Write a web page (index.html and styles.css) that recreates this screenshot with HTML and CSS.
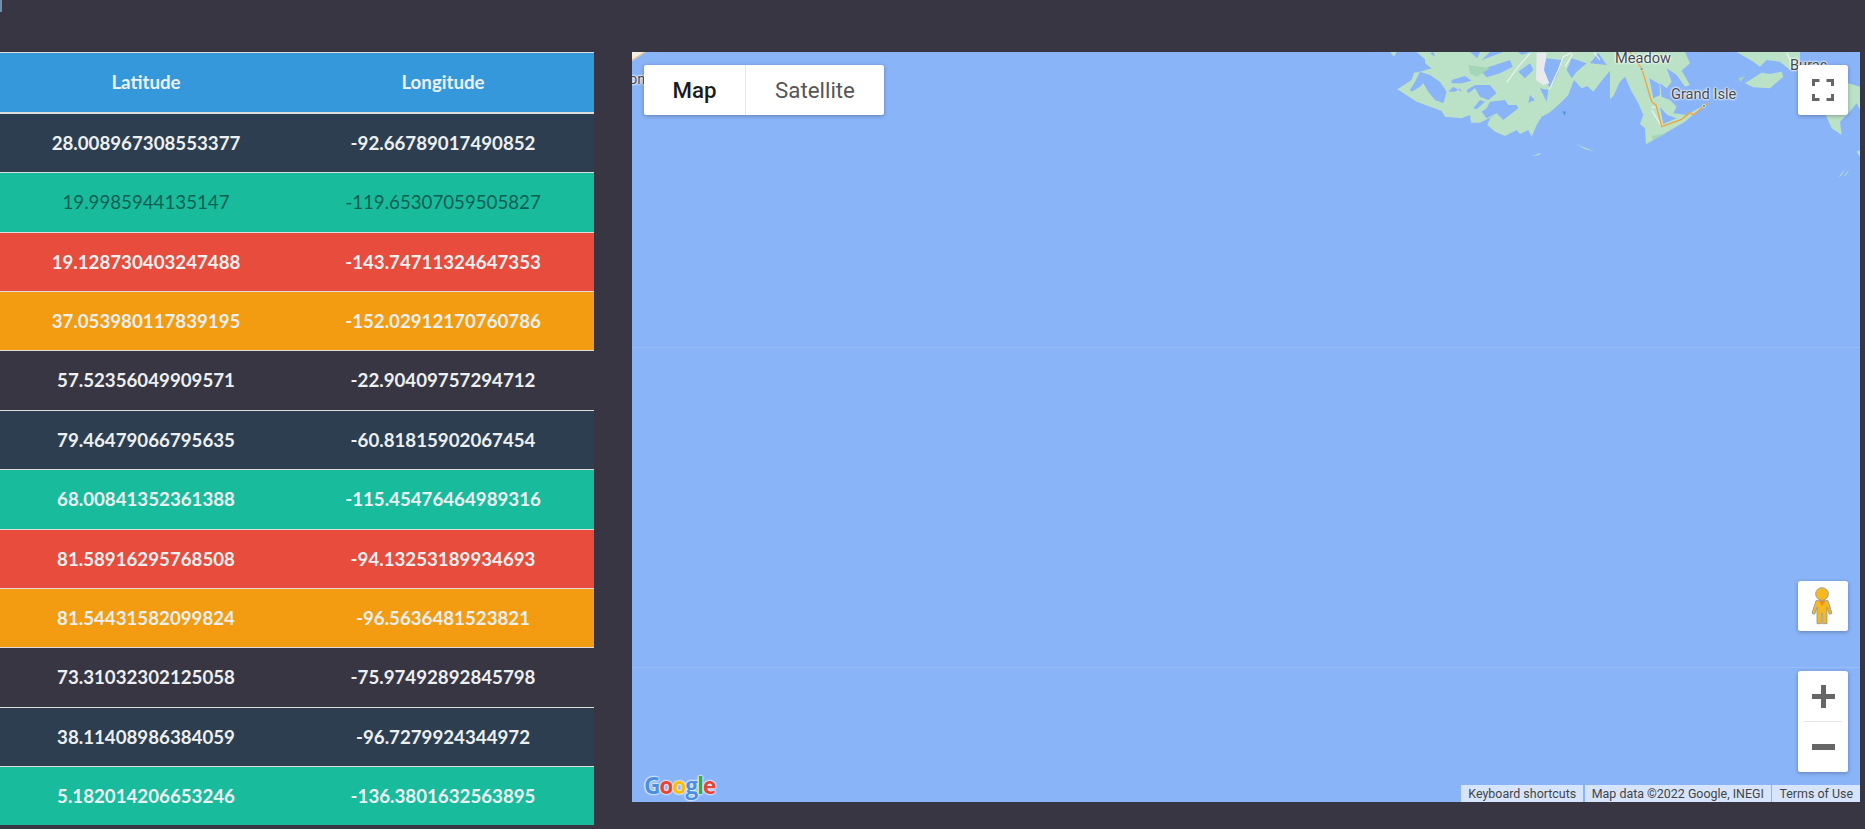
FILE: index.html
```html
<!DOCTYPE html>
<html lang="en">
<head>
    <meta charset="UTF-8">
    <title>Coordinates</title>
    <link rel="stylesheet" href="styles.css">
</head>
<body>
    <div class="corner-mark"></div>
    <div class="page">
        <table class="coords">
            <thead>
                <tr><th class="col-lat">Latitude</th><th class="col-lng">Longitude</th></tr>
            </thead>
            <tbody>
                <tr class="row-navy"><td>28.008967308553377</td><td>-92.66789017490852</td></tr>
                <tr class="row-green row-hover"><td>19.9985944135147</td><td>-119.65307059505827</td></tr>
                <tr class="row-red"><td>19.128730403247488</td><td>-143.74711324647353</td></tr>
                <tr class="row-orange"><td>37.053980117839195</td><td>-152.02912170760786</td></tr>
                <tr class="row-dark"><td>57.52356049909571</td><td>-22.90409757294712</td></tr>
                <tr class="row-navy"><td>79.46479066795635</td><td>-60.81815902067454</td></tr>
                <tr class="row-green"><td>68.00841352361388</td><td>-115.45476464989316</td></tr>
                <tr class="row-red"><td>81.58916295768508</td><td>-94.13253189934693</td></tr>
                <tr class="row-orange"><td>81.54431582099824</td><td>-96.5636481523821</td></tr>
                <tr class="row-dark"><td>73.31032302125058</td><td>-75.97492892845798</td></tr>
                <tr class="row-navy"><td>38.11408986384059</td><td>-96.7279924344972</td></tr>
                <tr class="row-green"><td>5.182014206653246</td><td>-136.3801632563895</td></tr>
            </tbody>
        </table>

        <div class="map">
            <!-- coast, drawn at 3x so the numbers are easy to compare -->
            <svg class="land" viewBox="0 6 1410 420" width="470" height="140">
                <path class="land-fill" d="M22 118L65 90L72 68L90 65L125 55L105 40L105 28L80 6H660V62L635 92L610 125L592 108L575 115L552 90L535 135L505 165L478 188L455 200L440 225L425 260L415 240L390 252L380 240L345 258L315 245L292 225L300 205L322 192L270 218L243 218L240 195L215 205L165 200L155 183L80 155Z"/>
                <path class="land-fill" d="M0 6H20L12 20ZM560 283L615 305L585 297ZM425 318L455 308L445 316Z"/>
                <path class="water" d="M60 120L75 95L90 65L120 75L150 95L170 125L160 160L135 150L115 125L100 100L90 110L65 125ZM185 90L225 78L245 92L215 100L185 100ZM270 60L360 30L368 50L330 70L290 82ZM230 120L255 105L300 105L320 130L295 150L270 140L255 115L235 130ZM215 125L210 115L195 125L175 125L190 110ZM250 175L270 150L285 155L260 178ZM300 155L345 150L355 165L380 165L385 175L340 210L320 190L290 205L275 185L290 175ZM385 65L420 40L430 60L405 85ZM470 25L515 30L505 70L480 115L455 70ZM420 135L435 150L415 158ZM545 25L590 40L560 65L545 85L530 60ZM625 8L650 45L600 40ZM450 115L475 120L470 155ZM240 6H270L262 25ZM300 6H340L275 30ZM385 6H420L395 15ZM130 6L135 20L120 10Z"/>
                <path class="land-dark" d="M235 45L300 55L260 80L240 70Z"/>
                <path class="land-white" d="M440 8H470L462 60L478 100L460 105L438 90Z"/>
                <path class="road-white" d="M350 97L385 50L420 10M478 118L505 60L520 20L545 8M525 50L548 12M612 8L630 30"/>
                <path class="inlet" d="M517 183L527 185L525 198Z"/>

                <g transform="translate(660 0)">
                    <path class="land-fill" d="M0 6H225L240 40L215 62L240 105L225 110L200 75L170 55L185 95L170 115L150 100L155 140L180 150L200 170L190 190L230 195L295 158L260 185L225 215L130 270L108 283L105 235L90 222L100 195L85 160L65 125L45 80L30 95L25 105L12 135L0 148Z"/>
                    <path class="water" d="M118 85L148 102L150 135L130 145ZM150 172L172 195L200 205L160 222Z"/>
                    <path class="land-fill" d="M380 6L430 35L450 50L470 30L510 35L540 60L570 45V6ZM405 100L455 68L480 72L515 65L520 80L480 115L430 112ZM715 100L750 110V180L740 160L715 190L690 215L695 255L665 235L645 190ZM740 305L750 300V320ZM685 383L705 355L695 375ZM700 380L718 358L708 375Z"/>
                    <path class="land-dark" d="M125 258L170 250L130 270ZM385 85L405 78L392 95Z"/>
                    <path class="road-white" d="M125 172H136M125 180L155 230M530 8L545 40"/>
                    <path class="road" d="M60 6L95 55L125 155L138 165L155 230L215 208L240 188L250 195L295 158"/>
                    <circle class="road-dot" cx="95" cy="57" r="5"/>
                    <circle class="road-dot" cx="282" cy="168" r="5"/>
                </g>
            </svg>
            <svg class="corner-road" viewBox="0 0 14 9" width="14" height="9">
                <path d="M0 9V0H14Z" fill="#f3ede2"/>
                <path d="M0 8L13 0" stroke="#f2b568" fill="none"/>
            </svg>

            <span class="place place-on">on</span>
            <span class="place place-meadow">Meadow</span>
            <span class="place place-isle">Grand Isle</span>
            <span class="place place-buras">Buras</span>

            <div class="seam seam-1"></div>
            <div class="seam seam-2"></div>

            <div class="map-type ctrl">
                <div class="type-btn type-map">Map</div>
                <div class="type-btn type-sat">Satellite</div>
            </div>

            <div class="fullscreen ctrl">
                <svg viewBox="0 0 22 22" width="22" height="22">
                    <path d="M1.5 7V1.5H7.5M14.5 1.5H20.5V7M20.5 15V20.5H14.5M7.5 20.5H1.5V15" fill="none" stroke="#666" stroke-width="3"/>
                </svg>
            </div>

            <div class="pegman ctrl">
                <svg viewBox="114 33 150 150" width="50" height="50">
                    <circle cx="186" cy="72" r="19" fill="#f7b81f" stroke="#8a969b" stroke-width="2.5"/>
                    <path d="M168 92H204L216 130L208 133L201 112V161H188V131H184V161H171V112L164 133L156 130Z" fill="#f7b81f" stroke="#8a969b" stroke-width="2.5" stroke-linejoin="round"/>
                    <path d="M177 92H196L186 108Z" fill="#e98a24"/>
                </svg>
            </div>

            <div class="zoom ctrl">
                <div class="zoom-btn">
                    <svg viewBox="0 0 23 23" width="23" height="23"><path d="M9 0H14V9H23V14H14V23H9V14H0V9H9Z" fill="#666"/></svg>
                </div>
                <div class="zoom-line"></div>
                <div class="zoom-btn">
                    <svg viewBox="0 0 23 6" width="23" height="6"><path d="M0 0H23V6H0Z" fill="#666"/></svg>
                </div>
            </div>

            <div class="google"><span class="g-blue">G</span><span class="g-red">o</span><span class="g-yellow">o</span><span class="g-blue">g</span><span class="g-green">l</span><span class="g-red">e</span></div>

            <div class="attribution">
                <span>Keyboard shortcuts</span>
                <span>Map data ©2022 Google, INEGI</span>
                <span>Terms of Use</span>
            </div>
        </div>
    </div>
</body>
</html>
```

FILE: styles.css
```css
body {
    margin: 0;
    background-color: #393643;
    font-family: "Lato", sans-serif;
    overflow: hidden;
}
.corner-mark {
    position: absolute;
    top: 0;
    left: 0;
    width: 2px;
    height: 12px;
    background-color: #6f8fad;
}
.page {
    display: flex;
    align-items: flex-start;
    gap: 38px;
    padding: 52px 5px 0 0;
}

/* table */
.coords {
    flex: none;
    width: 594px;
    border-collapse: separate;
    border-spacing: 0;
    table-layout: fixed;
    color: #ecf0f1;
    font-size: 18.7px;
    font-weight: 700;
    text-align: center;
    line-height: 26.36px;
}
.coords th {
    padding: 16.32px 0;
    background-color: #3498db;
    border-top: 1px solid #ddd;
    border-bottom: 2px solid #ddd;
}
.col-lat {
    width: 292px;
}
.col-lng {
    width: 302px;
}
.coords td {
    padding: 16px 0;
    border-top: 1px solid #ddd;
}
.coords tbody tr:first-child td {
    border-top: 0;
}
.row-navy td {
    background-color: #2c3e50;
}
.row-green td {
    background-color: #18bc9c;
}
.row-red td {
    background-color: #e74c3c;
}
.row-orange td {
    background-color: #f39c12;
}
.row-dark td {
    background-color: #393643;
}
.row-hover td {
    color: #0f5e52;
    font-weight: 400;
}

/* map */
.map {
    position: relative;
    flex: 1;
    height: 750px;
    overflow: hidden;
    background-color: #8ab4f8;
    font-family: "Roboto", sans-serif;
}
.land {
    position: absolute;
    top: 0;
    left: 758px;
    filter: blur(0.4px);
}
.land-fill {
    fill: #bbe2c6;
}
.land-dark {
    fill: #a3d5b6;
}
.land-white {
    fill: #e8eaed;
}
.water {
    fill: #8ab4f8;
}
.inlet {
    fill: #4f8fd8;
}
.road-white {
    fill: none;
    stroke: #eef1f3;
    stroke-width: 3.5;
}
.road {
    fill: none;
    stroke: #f3a33c;
    stroke-width: 4;
}
.road-dot {
    fill: #6f9f8c;
    stroke: #eef1f3;
    stroke-width: 2;
}
.corner-road {
    position: absolute;
    top: 0;
    left: 0;
}
.place {
    position: absolute;
    font-size: 14.6px;
    line-height: 16px;
    color: #444a4f;
    text-shadow: 0 0 2px #fff, 0 0 2px #fff, 0 0 3px #fff;
}
.place-on {
    top: 19px;
    left: -3px;
}
.place-meadow {
    top: -2px;
    left: 983px;
}
.place-isle {
    top: 34px;
    left: 1039px;
}
.place-buras {
    top: 5px;
    left: 1158px;
}
.seam {
    position: absolute;
    left: 0;
    right: 0;
    height: 1px;
    background-color: rgba(255, 255, 255, 0.12);
}
.seam-1 {
    top: 295px;
}
.seam-2 {
    top: 615px;
}

/* map controls */
.ctrl {
    position: absolute;
    background-color: #fff;
    border-radius: 2.5px;
    box-shadow: 0 1px 4px rgba(0, 0, 0, 0.3);
}
.map-type {
    display: flex;
    top: 13px;
    left: 12px;
    width: 240px;
    height: 50px;
    font-size: 22.3px;
}
.type-btn {
    display: flex;
    align-items: center;
    justify-content: center;
}
.type-map {
    width: 101px;
    border-right: 1px solid #e6e6e6;
    color: #1c1c1c;
    font-weight: 500;
}
.type-sat {
    flex: 1;
    color: #565656;
}
.fullscreen, .pegman {
    display: flex;
    align-items: center;
    justify-content: center;
    right: 12px;
    width: 50px;
    height: 50px;
}
.fullscreen {
    top: 13px;
}
.pegman {
    top: 529px;
}
.zoom {
    top: 619px;
    right: 12px;
    width: 50px;
    height: 101px;
}
.zoom-btn {
    display: flex;
    align-items: center;
    justify-content: center;
    height: 50px;
}
.zoom-line {
    height: 1px;
    margin: 0 6px;
    background-color: #e6e6e6;
}
.google {
    position: absolute;
    left: 12px;
    bottom: 3px;
    font-family: "Open Sans", sans-serif;
    font-size: 23px;
    font-weight: 700;
    line-height: 28px;
    letter-spacing: -1.3px;
    text-shadow: 0 0 2px #fff, 0 0 2px #fff, 0 0 2px #fff;
}
.g-blue {
    color: #4a90e2;
}
.g-red {
    color: #ea4335;
}
.g-yellow {
    color: #fbbc05;
}
.g-green {
    color: #34a853;
}
.attribution {
    position: absolute;
    right: 0;
    bottom: 0;
    display: flex;
    gap: 1.5px;
    color: #444;
    font-size: 12.45px;
    line-height: 17px;
}
.attribution span {
    padding: 0 7px;
    background-color: rgba(255, 255, 255, 0.65);
    white-space: nowrap;
}
```
